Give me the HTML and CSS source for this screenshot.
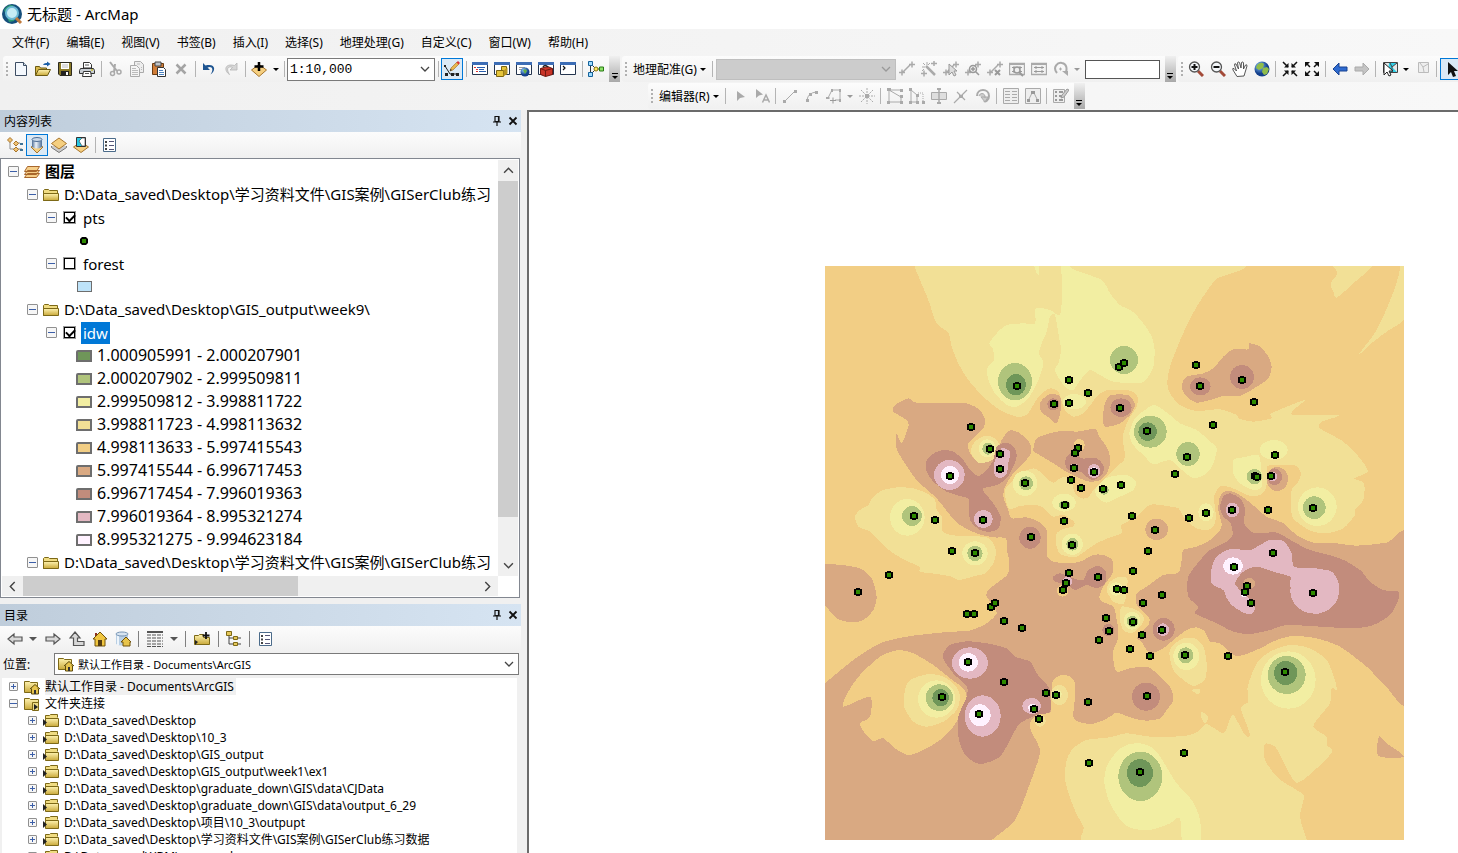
FILE: index.html
```html
<!DOCTYPE html>
<html lang="zh-CN">
<head>
<meta charset="utf-8">
<title>无标题 - ArcMap</title>
<link rel="stylesheet" href="styles.css">
</head>
<body>
<svg class="sprite" aria-hidden="true">
  <defs>
    <linearGradient id="gold" x1="0" y1="0" x2="0" y2="1"><stop offset="0" stop-color="#fff3b0"/><stop offset="1" stop-color="#c9a93a"/></linearGradient>
    <linearGradient id="metal"><stop offset="0" stop-color="#4d6d95"/><stop offset=".4" stop-color="#eef4fa"/><stop offset="1" stop-color="#4d6d95"/></linearGradient>
    <radialGradient id="ball" cx=".35" cy=".3"><stop offset="0" stop-color="#8cc8ff"/><stop offset="1" stop-color="#14408c"/></radialGradient>
  </defs>
  <symbol id="new" viewBox="0 0 16 16"><path d="M2.500 1.500h8l3 3v10h-11z" fill="#f4f8fd" stroke="#3d4d63"/><path d="M10.500 1.500v3h3" fill="#cddbea" stroke="#3d4d63"/></symbol>
  <symbol id="open" viewBox="0 0 16 16"><path d="M.5 14V5.500h4l1 1.500h6v7z" fill="#d9b94c" stroke="#6b5a12"/><path d="M.5 14.500l3-6h12l-3 6z" fill="url(#gold)" stroke="#6b5a12"/><path d="M8 4c1-2 3-2 4-2V.5L15.500 3 12 5.500V4c-2 0-3 0-4 0" fill="#1c5fa8"/></symbol>
  <symbol id="save" viewBox="0 0 16 16"><path d="M1.500 1.500h13v13H3l-1.500-1.500z" fill="#8b7a28" stroke="#2c2a20"/><path d="M4 2h8v6H4z" fill="#fff"/><path d="M5 4h6M5 6h6" stroke="#bbb"/><path d="M4 10h8v4H4z" fill="#222"/><path d="M9 11h2v3H9z" fill="#fff"/></symbol>
  <symbol id="print" viewBox="0 0 16 16"><path d="M4.500 7V1.500h6l2 2V7z" fill="#fff" stroke="#333"/><path d="M1.500 7.500h13l1 2v3H.5v-3z" fill="#c9ced4" stroke="#333"/><path d="M4.500 10.500h7l1 5h-9z" fill="#fff" stroke="#333"/><path d="M6 4h4M6 12.500h4" stroke="#555"/><path d="M12 9h2" stroke="#c8c12c" stroke-width="1.500"/></symbol>
  <symbol id="cut" viewBox="0 0 16 16"><path d="M3 1l7 9M8 3L7 11" stroke="#aaa" stroke-width="2" fill="none"/><circle cx="5.500" cy="12.500" r="2" fill="none" stroke="#aaa" stroke-width="1.500"/><circle cx="12" cy="11" r="2" fill="none" stroke="#aaa" stroke-width="1.500"/></symbol>
  <symbol id="copy" viewBox="0 0 16 16"><path d="M5.500.5h6l3 3v8h-9z" fill="#eee" stroke="#aaa"/><path d="M1.500 4.500h6l3 3v8h-9z" fill="#f4f4f4" stroke="#aaa"/><path d="M3 7.500h4M3 9.500h6M3 11.500h6M3 13.500h6M8 3h3M12 6.500h1M12 8.500h1" stroke="#bbb"/></symbol>
  <symbol id="paste" viewBox="0 0 16 16"><path d="M1.500 2.500h11v11h-11z" fill="#d07d38" stroke="#6b3c12"/><path d="M4 1h6v4H4z" fill="#bfc5cb" stroke="#444"/><path d="M6.500 6.500h6l2 2v7h-8z" fill="#fff" stroke="#333"/><path d="M8 9.500h4M8 11.500h5M8 13.500h5" stroke="#4c82bf"/></symbol>
  <symbol id="delete" viewBox="0 0 16 16"><path d="M3.500 3.500l9 9M12.500 3.500l-9 9" stroke="#a4a4a4" stroke-width="2.500"/></symbol>
  <symbol id="undo" viewBox="0 0 16 16"><path d="M2 2v7h7L6.500 6.500c4-2 7 1 3 7C15 10 15 2 4.500 4.500z" fill="#1e5591"/></symbol>
  <symbol id="redo" viewBox="0 0 16 16"><path d="M14 2v7H7l2.500-2.500c-4-2-7 1-3 7C1 10 1 2 11.500 4.500z" fill="#d6d6d6" stroke="#b5b5b5" stroke-width=".8"/></symbol>
  <symbol id="add" viewBox="0 0 16 16"><path d="M.5 9L8 3.500 15.500 9 8 15.500z" fill="#f5cf80" stroke="#a8762d"/><path d="M8 1v9M3.500 5.500h9" stroke="#000" stroke-width="2.500"/></symbol>
  <symbol id="editor" viewBox="0 0 16 16"><path d="M1 5l5 8h9" fill="none" stroke="#222"/><path d="M0 4h2v2H0zM1 12h3v3H1zM7 12h3v3H7zM12 12h3v3h-3z" fill="#222"/><path d="M6 10l1-3 6-6 2 2-6 6z" fill="#e8b74f" stroke="#9b6a20" stroke-width=".6"/><path d="M12.500 1.500L14 0l2 2-1.500 1.500z" fill="#d33"/><path d="M6 10l.5-2L8 9z" fill="#222"/></symbol>
  <symbol id="window" viewBox="0 0 16 16"><path d="M.5 1.500h15v12H.5z" fill="#fff" stroke="#24344d"/><path d="M0 1h16v3H0z" fill="#3d6db5"/></symbol>
  <symbol id="toc" viewBox="0 0 16 16"><use href="#window"/><path d="M2 6.500h2M4 8.500h2M4 10.500h2" stroke="#d33"/><path d="M5 6.500h8M7 8.500h5M7 10.500h7" stroke="#2b5fae"/></symbol>
  <symbol id="cat" viewBox="0 0 16 16"><use href="#window"/><path d="M7.500 5.500h5v8h-5z" fill="#e6c53b" stroke="#7c6510"/><path d="M2.500 9.500h7v6h-7z" fill="#e6c53b" stroke="#7c6510"/><path d="M9.500 9.500l4-3v6l-4 3z" fill="#b89620"/></symbol>
  <symbol id="search" viewBox="0 0 16 16"><use href="#window"/><path d="M3 6.500h6M3 8.500h3" stroke="#999"/><circle cx="9" cy="11" r="4.500" fill="url(#ball)"/><path d="M7 9q3-2 4 1l-2 3z" fill="#65b046"/></symbol>
  <symbol id="toolbox" viewBox="0 0 16 16"><use href="#window"/><path d="M2.500 7.500l7-2 5 2v6l-7 2-5-2z" fill="#c93427" stroke="#701810"/><path d="M2.500 7.500l5 2 7-2M7.500 9.500v6" stroke="#701810" fill="none"/><path d="M5 6q2-3 5 0" fill="none" stroke="#222" stroke-width="1.500"/></symbol>
  <symbol id="python" viewBox="0 0 16 16"><use href="#window"/><path d="M3 5l2 2-2 2" fill="none" stroke="#111" stroke-width="1.200"/></symbol>
  <symbol id="model" viewBox="0 0 16 16"><path d="M2.500 5v6M4 4l4 4-4 4M8 8h4" fill="none" stroke="#333"/><path d="M.5.5h4v4h-4zM.5 11.500h4v4h-4z" fill="#9fdcff" stroke="#15629b"/><circle cx="8" cy="8" r="2" fill="#ffe75a" stroke="#8c7610"/><path d="M11.500 6h4v4h-4z" fill="#8be067" stroke="#287a14"/></symbol>
  <symbol id="link" viewBox="0 0 16 16"><path d="M4 11l8-8M0 11.500h6M3 8.500v6M10 3.500h6M13 .5v6" stroke="#aaa" stroke-width="1.500"/></symbol>
  <symbol id="auto" viewBox="0 0 16 16"><path d="M5 5l9 9" stroke="#aaa" stroke-width="2.500"/><path d="M0 12.500h6M3 9.500v6M10 2.500h6M13 0v5" stroke="#aaa" stroke-width="1.500"/><path d="M6 1v3M1 6h3M2 2l2 2M9 2L7 4M3 8L1 10" stroke="#aaa"/></symbol>
  <symbol id="selectlink" viewBox="0 0 16 16"><use href="#link"/><path d="M6 3v11l3-3 2 4 2-1-2-4h3z" fill="#ddd" stroke="#999"/></symbol>
  <symbol id="zoomlink" viewBox="0 0 16 16"><use href="#link"/><circle cx="8" cy="8" r="3.500" fill="#eee" stroke="#999" stroke-width="1.500"/><path d="M10.500 10.500L14 14M6 8h4M8 6v4" stroke="#999" stroke-width="1.500"/></symbol>
  <symbol id="dellink" viewBox="0 0 16 16"><use href="#link"/><path d="M8 9l5 5M13 9l-5 5" stroke="#999" stroke-width="2"/></symbol>
  <symbol id="view" viewBox="0 0 16 16"><path d="M.5 2.500h15v11H.5z" fill="#f2f2f2" stroke="#aaa" stroke-width="1.300"/><path d="M0 2h16v2H0z" fill="#aaa"/><path d="M3 6.500h10M3 10.500h10M5 5v3M11 5v3M5 9v3M11 9v3" stroke="#999"/></symbol>
  <symbol id="viewzoom" viewBox="0 0 16 16"><use href="#view"/><circle cx="8" cy="9" r="3" fill="#eee" stroke="#999" stroke-width="1.500"/><path d="M10 11l4 4" stroke="#999" stroke-width="2"/></symbol>
  <symbol id="rotate" viewBox="0 0 16 16"><path d="M4 12C-1 6 5 1 9 2c5 1 5 6 4 9" fill="none" stroke="#aaa" stroke-width="2"/><path d="M9 10h6v5z" fill="#aaa"/><path d="M6 8h3M7.500 6.500v3" stroke="#aaa"/></symbol>
  <symbol id="zoomin" viewBox="0 0 16 16"><path d="M10 10l5 5" stroke="#a34a38" stroke-width="3"/><circle cx="6.500" cy="6" r="5" fill="#f4f7fa" stroke="#555" stroke-width="1.300"/><path d="M3.500 6h6M6.500 3v6" stroke="#111" stroke-width="2"/></symbol>
  <symbol id="zoomout" viewBox="0 0 16 16"><path d="M10 10l5 5" stroke="#a34a38" stroke-width="3"/><circle cx="6.500" cy="6" r="5" fill="#f4f7fa" stroke="#555" stroke-width="1.300"/><path d="M3.500 6h6" stroke="#111" stroke-width="2"/></symbol>
  <symbol id="pan" viewBox="0 0 16 16"><path d="M5 15.500L1 9Q0 7 2 7.500L4.500 10 2.500 4Q2.500 2 4 3l2.500 5L5.500 2Q6 0 7.500 1.500L9 7 9.500 1.500Q11 0 11.500 2V8l2-4Q15 3 15 5l-3 10z" fill="#fff" stroke="#444" stroke-width=".9"/></symbol>
  <symbol id="globe" viewBox="0 0 16 16"><circle cx="8" cy="8" r="7.500" fill="url(#ball)"/><path d="M3 4q4-4 7-1L9 7 5 9 2 7zM9 7l4-1 2 2-2 5-3 1-2-3z" fill="#8fbc4a"/></symbol>
  <symbol id="fixin" viewBox="0 0 16 16"><path d="M1 1l5 5M15 1l-5 5M1 15l5-5M15 15l-5-5" stroke="#111" stroke-width="1.500"/><path d="M2 6.500h4.500V2M14 6.500H9.500V2M2 9.500h4.500V14M14 9.500H9.500V14" fill="#111"/></symbol>
  <symbol id="fixout" viewBox="0 0 16 16"><path d="M6 6L2 2M10 6l4-4M6 10l-4 4M10 10l4 4" stroke="#111" stroke-width="1.500"/><path d="M1 6V1h5M15 6V1h-5M1 10v5h5M15 10v5h-5" fill="#111"/></symbol>
  <symbol id="back" viewBox="0 0 16 16"><path d="M1 8l6-6v4h8v4H7v4z" fill="#2f6bd0" stroke="#194391"/></symbol>
  <symbol id="fwd" viewBox="0 0 16 16"><path d="M15 8L9 2v4H1v4h8v4z" fill="#c4c4c4" stroke="#aaa"/></symbol>
  <symbol id="selfeat" viewBox="0 0 16 16"><path d="M1.500 1.500h14v10h-14z" fill="#e8e8e8" stroke="#444"/><path d="M7 2h8l-5 4 5 5H6z" fill="#2fd0e8"/><path d="M8 2l2 4 5-4M10 6v6" stroke="#444" fill="none"/><path d="M2 2v12l3-3 2 4 2-1-2-4h4z" fill="#fff" stroke="#222"/></symbol>
  <symbol id="clearsel" viewBox="0 0 16 16"><path d="M3.500 1.500h10v10h-10z" fill="#eee" stroke="#bbb"/><path d="M5 2l3 4 5-3M8 6l1 5" stroke="#bbb" fill="none"/></symbol>
  <symbol id="pointer" viewBox="0 0 16 16"><path d="M5 1v13l3-3 2 5 3-1-2-5h4z" fill="#111"/></symbol>
  <symbol id="e-play" viewBox="0 0 16 16"><path d="M5 3v10l3-3 5-1z" fill="#aaa"/></symbol>
  <symbol id="e-anno" viewBox="0 0 16 16"><path d="M2 1v9l3-2.500 4-1z" fill="#aaa"/><path d="M8.500 14.500L12 7l3.500 7.500M10 12h4" fill="none" stroke="#aaa" stroke-width="1.500"/></symbol>
  <symbol id="e-line" viewBox="0 0 16 16"><path d="M3 13L13 3" stroke="#aaa"/><path d="M1 12h3v3H1zM12 2h3v3h-3z" fill="#aaa"/></symbol>
  <symbol id="e-arc" viewBox="0 0 16 16"><path d="M3 12Q4 5 12 4" stroke="#aaa" fill="none"/><path d="M2 11h3v3H2zM5 5h3v3H5zM11 3h3v3h-3z" fill="#aaa"/></symbol>
  <symbol id="e-trace" viewBox="0 0 16 16"><path d="M2 10l4-8h8v10H9M1 10h3" stroke="#aaa" fill="none"/><path d="M4 12.500h6M7 9.500v6" stroke="#999"/><path d="M5 1h2v3H5zM13 1h2v3h-2zM13 11h2v3h-2zM0 9h3v2H0z" fill="#aaa"/></symbol>
  <symbol id="e-point" viewBox="0 0 16 16"><path d="M8 0v16M0 8h16M2 2l12 12M14 2L2 14" stroke="#aaa" stroke-dasharray="2 1"/><path d="M6 6h4v4H6z" fill="#aaa"/></symbol>
  <symbol id="e-verts" viewBox="0 0 16 16"><path d="M2 2v12h12V9zM2 2h12" fill="none" stroke="#aaa"/><path d="M0 0h4v3H0zM13 1h3v3h-3zM0 13h3v3H0zM13 13h3v3h-3zM13 7h3v3h-3z" fill="#aaa"/></symbol>
  <symbol id="e-reshape" viewBox="0 0 16 16"><path d="M2 1v13h6M2 2l6 5v7" fill="none" stroke="#aaa"/><path d="M9 5h5v9" fill="none" stroke="#aaa" stroke-dasharray="1 1"/><path d="M0 0h3v3H0zM0 13h3v3H0zM7 6h3v3H7zM7 13h3v3H7zM13 13h3v3h-3z" fill="#aaa"/></symbol>
  <symbol id="e-cut" viewBox="0 0 16 16"><path d="M.5 4.500h15v7H.5z" fill="#dedede" stroke="#aaa"/><path d="M8 1v14" stroke="#aaa" stroke-width="1.500"/><path d="M6 0h4v2H6zM6 14h4v2H6z" fill="#aaa"/></symbol>
  <symbol id="e-split" viewBox="0 0 16 16"><path d="M1 15L14 2M4 4l8 8" stroke="#aaa" stroke-width="1.200"/><path d="M6 7h4v3H6z" fill="#aaa"/></symbol>
  <symbol id="e-rot" viewBox="0 0 16 16"><path d="M2 8c0-8 12-8 12 0 0 5-4 6-5 5" fill="none" stroke="#aaa" stroke-width="2"/><path d="M4 8c1-4 7-3 6 2M6 9h7l-3 5z" fill="#ccc" stroke="#aaa"/></symbol>
  <symbol id="e-attr" viewBox="0 0 16 16"><path d="M.5.5h15v15H.5z" fill="#eee" stroke="#aaa"/><path d="M2 3.500h5M2 6.500h5M2 9.500h5M2 12.500h5M9 3.500h5M9 6.500h5M9 9.500h5M9 12.500h5" stroke="#aaa"/></symbol>
  <symbol id="e-sketch" viewBox="0 0 16 16"><path d="M.5.5h15v15H.5z" fill="#eee" stroke="#aaa"/><path d="M3 13l4-8h2l4 8" fill="none" stroke="#aaa"/><path d="M6 3h4v3H6zM2 11h3v3H2zM11 11h3v3h-3z" fill="#999"/></symbol>
  <symbol id="e-create" viewBox="0 0 16 16"><path d="M.5 1.500h11v13H.5z" fill="#eee" stroke="#aaa"/><path d="M2 4h2M2 8h2M2 12h2M6 4h4M6 8h3M6 12h4" stroke="#999" stroke-width="2"/><path d="M8 10l1-3 5-6 2 1-5 7z" fill="#ccc" stroke="#999"/></symbol>
  <symbol id="t-order" viewBox="0 0 16 16"><path d="M3 5v7h5M7 6h6M11 12h4" fill="none" stroke="#8b8b8b"/><path d="M3 .5L5.500 3 3 5.500.5 3zM9 4l2.500 2.500L9 9 6.500 6.500zM9 10l2.500 2.500L9 15l-2.500-2.500z" fill="#f0c172" stroke="#a8762d"/><path d="M13 6h3v2h-3zM13 12h3v2h-3z" fill="#3e7397"/></symbol>
  <symbol id="t-source" viewBox="0 0 16 16"><path d="M2 10l6-3 6 3-6 6z" fill="#f5cf80" stroke="#a8762d"/><path d="M3 2v8q5 3 10 0V2" fill="url(#metal)"/><ellipse cx="8" cy="2.500" rx="5" ry="2" fill="#c9d8e8" stroke="#4d6d95"/></symbol>
  <symbol id="t-vis" viewBox="0 0 16 16"><path d="M.5 9v1.500L8 15.500l7.500-5V9" fill="#ccc" stroke="#777"/><path d="M.5 6.500L8 1l7.500 5.500L8 12z" fill="#f5cf80" stroke="#a8762d"/></symbol>
  <symbol id="t-sel" viewBox="0 0 16 16"><path d="M.5 10L8 5l7.500 5L8 15.500z" fill="#f5cf80" stroke="#a8762d"/><path d="M3.500.5h9v9h-9z" fill="#26c8e4" stroke="#333"/><path d="M9 1h3v8H9L6 4z" fill="#fff" stroke="#333" stroke-width=".6"/></symbol>
  <symbol id="t-opt" viewBox="0 0 16 16"><path d="M2.500 1.500h12v13h-12z" fill="#fff" stroke="#4b6b8a"/><path d="M4 4h2v2H4zM4 7.500h2v2H4zM4 11h2v2H4z" fill="#444"/><path d="M8 4.500h5M8 8.500h5M8 12.500h5" stroke="#557"/></symbol>
  <symbol id="layers" viewBox="0 0 16 16"><path d="M.5 13.500l3-4h12l-3 4zM.5 10.500l3-4h12l-3 4zM.5 7.500l3-5h12l-3 5z" fill="#f6cf8a" stroke="#a8672d"/></symbol>
  <symbol id="folder" viewBox="0 0 16 16"><path d="M.5 13.500v-10l1-1h4l1 1h8v10z" fill="#f0dc82" stroke="#7d6917"/><path d="M.5 6.500h15v7H.5z" fill="url(#gold)" stroke="#7d6917"/></symbol>
  <symbol id="cfolder" viewBox="0 0 16 16"><path d="M2.500 12.500v-10h4l1-1h7v3" fill="#f0dc82" stroke="#7d6917"/><path d="M2.500 5.500h13v8h-13z" fill="url(#gold)" stroke="#7d6917"/><path d="M0 6l4 3.500L0 13z" fill="#222"/></symbol>
  <symbol id="homefolder" viewBox="0 0 16 16"><path d="M.5 13.500v-11h5l1 1h7v10z" fill="url(#gold)" stroke="#7d6917"/><path d="M6 10l5-4.500 5 4.500M7.500 9.500V15h7V9.500" fill="#e8c44b" stroke="#5d4a0b"/><path d="M10 11h2v4h-2z" fill="#333"/></symbol>
  <symbol id="foldercon" viewBox="0 0 16 16"><path d="M.5 13.500v-11h5l1 1h8v10z" fill="url(#gold)" stroke="#7d6917"/><path d="M8.500 6.500h6v8h-6z" fill="#eddb88" stroke="#7d6917"/><path d="M10 8l4 3-4 3z" fill="#222"/></symbol>
  <symbol id="c-back" viewBox="0 0 16 16"><path d="M1 8l6-5v3h8v4H7v3z" fill="#d8d8d8" stroke="#555" stroke-width="1.200"/></symbol>
  <symbol id="c-fwd" viewBox="0 0 16 16"><path d="M15 8L9 3v3H1v4h8v3z" fill="#d8d8d8" stroke="#555" stroke-width="1.200"/></symbol>
  <symbol id="c-up" viewBox="0 0 16 16"><path d="M6 1l5 6H8.500v3.500H15v4H4.500V7H1z" fill="#d8d8d8" stroke="#555" stroke-width="1.200"/></symbol>
  <symbol id="c-home" viewBox="0 0 16 16"><path d="M3 2h2v5H3z" fill="#8c2f1c"/><path d="M1 8l7-7 7 7h-2v7H3V8z" fill="#f0c640" stroke="#70520b"/><path d="M6 9h4v6H6z" fill="#553e12"/></symbol>
  <symbol id="c-gdb" viewBox="0 0 16 16"><path d="M1 3v10q5 3 12 0V3" fill="#b9cfe4"/><path d="M3 4v10" stroke="#eef5fb" stroke-width="2"/><ellipse cx="7" cy="3" rx="6" ry="2" fill="#d7e4f1" stroke="#7795b5"/><path d="M6 11l5-5 5 5h-1v4H8v-4z" fill="#e8c44b" stroke="#70520b"/></symbol>
  <symbol id="c-list" viewBox="0 0 16 16"><path d="M0 0h16v2H0z" fill="#555"/><path d="M0 4h16M0 7h16M0 10h16M0 13h16M0 15.500h16" stroke="#555" stroke-width="1.200" stroke-dasharray="4 1"/></symbol>
  <symbol id="c-connect" viewBox="0 0 16 16"><path d="M.5 13.500v-9h4l1-1h4v3h6v7z" fill="url(#gold)" stroke="#7d6917"/><path d="M12 1v7M8.500 4.500h7" stroke="#111" stroke-width="1.800"/><path d="M1 9l3 2-3 3z" fill="#222"/></symbol>
  <symbol id="c-tree" viewBox="0 0 16 16"><path d="M3 4v9h4M3 7h4M12 7h3M12 13h3" fill="none" stroke="#444"/><path d="M.5.5h5v4h-5zM7.500 5.500h4v3h-4zM7.500 11.500h4v3h-4z" fill="#e6c859" stroke="#7d6917"/></symbol>
  <symbol id="pin" viewBox="0 0 10 10"><path d="M3 .5h4v5H3zM1 6h8M5 6v4M6.500 1v5" fill="none" stroke="#111" stroke-width="1.200"/></symbol>
  <symbol id="close" viewBox="0 0 10 10"><path d="M1.500 1.500l7 7M8.500 1.500l-7 7" stroke="#111" stroke-width="1.800"/></symbol>
  <symbol id="chev" viewBox="0 0 10 10"><path d="M1 3l4 4 4-4" fill="none" stroke="currentColor" stroke-width="1.300"/></symbol>
</svg>

<header class="titlebar">
  <svg class="logo" viewBox="0 0 22 22"><circle cx="11" cy="11" r="10" fill="#154f7c"/><path d="M3 7q5-7 10-4l-2 3 5 3-3 9-5 1z" fill="#2c9a72"/><circle cx="11" cy="10" r="6" fill="#c7ecf5" stroke="#6db9d6" stroke-width="2"/><path d="M15 15l5 5" stroke="#c07a3c" stroke-width="3"/></svg>
  <h1>无标题 - ArcMap</h1>
</header>

<nav class="menubar">
  <button>文件(F)</button><button>编辑(E)</button><button>视图(V)</button><button>书签(B)</button><button>插入(I)</button><button>选择(S)</button><button>地理处理(G)</button><button>自定义(C)</button><button>窗口(W)</button><button>帮助(H)</button>
</nav>

<div class="toolbars">
  <div class="toolrow">
    <div class="bar" role="toolbar" aria-label="标准">
      <i class="grip"></i>
      <button class="tb" aria-label="新建"><svg><use href="#new"/></svg></button><button class="tb" aria-label="打开"><svg><use href="#open"/></svg></button><button class="tb" aria-label="保存"><svg><use href="#save"/></svg></button><button class="tb" aria-label="打印"><svg><use href="#print"/></svg></button><i class="sep"></i>
      <button class="tb" aria-label="剪切"><svg><use href="#cut"/></svg></button><button class="tb" aria-label="复制"><svg><use href="#copy"/></svg></button><button class="tb" aria-label="粘贴"><svg><use href="#paste"/></svg></button><button class="tb" aria-label="删除"><svg><use href="#delete"/></svg></button><i class="sep"></i>
      <button class="tb" aria-label="撤消"><svg><use href="#undo"/></svg></button><button class="tb" aria-label="恢复"><svg><use href="#redo"/></svg></button><i class="sep"></i>
      <button class="tb" aria-label="添加数据"><svg><use href="#add"/></svg></button><button class="drop" aria-label="更多数据"></button><i class="sep"></i>
      <span class="combo scale"><select aria-label="比例"><option>1:10,000</option></select><svg><use href="#chev"/></svg></span><i class="sep"></i>
      <button class="tb on" aria-label="编辑器工具条"><svg><use href="#editor"/></svg></button><i class="sep"></i>
      <button class="tb" aria-label="内容列表"><svg><use href="#toc"/></svg></button><button class="tb" aria-label="目录"><svg><use href="#cat"/></svg></button><button class="tb" aria-label="搜索"><svg><use href="#search"/></svg></button><button class="tb" aria-label="工具箱"><svg><use href="#toolbox"/></svg></button><button class="tb" aria-label="Python"><svg><use href="#python"/></svg></button><i class="sep"></i>
      <button class="tb" aria-label="模型构建器"><svg><use href="#model"/></svg></button><button class="more" aria-label="工具条选项"></button>
    </div>
    <div class="bar" role="toolbar" aria-label="地理配准">
      <i class="grip"></i>
      <button class="textbtn">地理配准(G)<i></i></button><i class="sep"></i>
      <span class="combo off"><select aria-label="图层" disabled><option></option></select><svg><use href="#chev"/></svg></span>
      <button class="tb" aria-label="控制点"><svg><use href="#link"/></svg></button><button class="tb" aria-label="自动配准"><svg><use href="#auto"/></svg></button><button class="tb" aria-label="选择链接"><svg><use href="#selectlink"/></svg></button><button class="tb" aria-label="缩放至链接"><svg><use href="#zoomlink"/></svg></button><button class="tb" aria-label="删除链接"><svg><use href="#dellink"/></svg></button><button class="tb" aria-label="查看器"><svg><use href="#viewzoom"/></svg></button><button class="tb" aria-label="链接表"><svg><use href="#view"/></svg></button><button class="tb" aria-label="旋转"><svg><use href="#rotate"/></svg></button><button class="drop dim" aria-label="旋转选项"></button>
      <input class="angle" type="text" aria-label="角度"><button class="more" aria-label="工具条选项"></button>
    </div>
    <div class="bar grow" role="toolbar" aria-label="工具">
      <i class="grip"></i>
      <button class="tb" aria-label="放大"><svg><use href="#zoomin"/></svg></button><button class="tb" aria-label="缩小"><svg><use href="#zoomout"/></svg></button><button class="tb" aria-label="平移"><svg><use href="#pan"/></svg></button><button class="tb" aria-label="全图"><svg><use href="#globe"/></svg></button><i class="sep"></i>
      <button class="tb" aria-label="固定比例放大"><svg><use href="#fixin"/></svg></button><button class="tb" aria-label="固定比例缩小"><svg><use href="#fixout"/></svg></button><i class="sep"></i>
      <button class="tb" aria-label="后退"><svg><use href="#back"/></svg></button><button class="tb" aria-label="前进"><svg><use href="#fwd"/></svg></button><i class="sep"></i>
      <button class="tb" aria-label="选择要素"><svg><use href="#selfeat"/></svg></button><button class="drop" aria-label="选择方式"></button><button class="tb" aria-label="清除所选"><svg><use href="#clearsel"/></svg></button><i class="sep"></i>
      <button class="tb on" aria-label="选择元素"><svg><use href="#pointer"/></svg></button>
    </div>
  </div>
  <div class="toolrow second">
    <div class="bar" role="toolbar" aria-label="编辑器">
      <i class="grip"></i>
      <button class="textbtn">编辑器(R)<i></i></button><i class="sep"></i>
      <button class="tb" aria-label="编辑工具"><svg><use href="#e-play"/></svg></button><button class="tb" aria-label="编辑注记"><svg><use href="#e-anno"/></svg></button><i class="sep"></i>
      <button class="tb" aria-label="直线段"><svg><use href="#e-line"/></svg></button><button class="tb" aria-label="弧段"><svg><use href="#e-arc"/></svg></button><button class="tb" aria-label="追踪"><svg><use href="#e-trace"/></svg></button><button class="drop dim" aria-label="构造方法"></button><button class="tb" aria-label="点"><svg><use href="#e-point"/></svg></button><i class="sep"></i>
      <button class="tb" aria-label="编辑折点"><svg><use href="#e-verts"/></svg></button><button class="tb" aria-label="整形"><svg><use href="#e-reshape"/></svg></button><button class="tb" aria-label="裁剪面"><svg><use href="#e-cut"/></svg></button><button class="tb" aria-label="分割"><svg><use href="#e-split"/></svg></button><button class="tb" aria-label="旋转"><svg><use href="#e-rot"/></svg></button><i class="sep"></i>
      <button class="tb" aria-label="属性"><svg><use href="#e-attr"/></svg></button><button class="tb" aria-label="草图属性"><svg><use href="#e-sketch"/></svg></button><i class="sep"></i>
      <button class="tb" aria-label="创建要素"><svg><use href="#e-create"/></svg></button><button class="more" aria-label="工具条选项"></button>
    </div>
  </div>
</div>

<main class="work">
  <aside class="dock">
    <section class="panel toc">
      <header class="cap"><h2>内容列表</h2><button aria-label="自动隐藏"><svg><use href="#pin"/></svg></button><button aria-label="关闭"><svg><use href="#close"/></svg></button></header>
      <div class="panelbar">
        <button class="tb" aria-label="按绘制顺序列出"><svg><use href="#t-order"/></svg></button><button class="tb on" aria-label="按源列出"><svg><use href="#t-source"/></svg></button><button class="tb" aria-label="按可见性列出"><svg><use href="#t-vis"/></svg></button><button class="tb" aria-label="按选择列出"><svg><use href="#t-sel"/></svg></button><i class="sep"></i><button class="tb" aria-label="选项"><svg><use href="#t-opt"/></svg></button>
      </div>
      <div class="tocbox">
        <ul class="tree big">
          <li><div class="row"><button class="exp" aria-label="折叠"></button><svg><use href="#layers"/></svg><b>图层</b></div>
            <ul>
              <li><div class="row"><button class="exp" aria-label="折叠"></button><svg><use href="#folder"/></svg><span>D:\Data_saved\Desktop\学习资料文件\GIS案例\GISerClub练习</span></div>
                <ul>
                  <li><div class="row"><button class="exp" aria-label="折叠"></button><input type="checkbox" id="l1" checked><label for="l1">pts</label></div>
                    <div class="row sym"><svg class="pt" viewBox="-4 -4 8 8"><path d="M-2-4h4l2 2v4l-2 2h-4l-2-2v-4z"/><path class="g" d="M-2-2h4v4h-4z"/></svg></div></li>
                  <li><div class="row"><button class="exp" aria-label="折叠"></button><input type="checkbox" id="l2"><label for="l2">forest</label></div>
                    <div class="row sym"><i class="sw water"></i></div></li>
                </ul></li>
              <li><div class="row"><button class="exp" aria-label="折叠"></button><svg><use href="#folder"/></svg><span>D:\Data_saved\Desktop\GIS_output\week9\</span></div>
                <ul>
                  <li><div class="row"><button class="exp" aria-label="折叠"></button><input type="checkbox" id="l3" checked><label for="l3" class="sel">idw</label></div>
                    <div class="row sym"><i class="sw c1"></i><span>1.000905991 - 2.000207901</span></div>
                    <div class="row sym"><i class="sw c2"></i><span>2.000207902 - 2.999509811</span></div>
                    <div class="row sym"><i class="sw c3"></i><span>2.999509812 - 3.998811722</span></div>
                    <div class="row sym"><i class="sw c4"></i><span>3.998811723 - 4.998113632</span></div>
                    <div class="row sym"><i class="sw c5"></i><span>4.998113633 - 5.997415543</span></div>
                    <div class="row sym"><i class="sw c6"></i><span>5.997415544 - 6.996717453</span></div>
                    <div class="row sym"><i class="sw c7"></i><span>6.996717454 - 7.996019363</span></div>
                    <div class="row sym"><i class="sw c8"></i><span>7.996019364 - 8.995321274</span></div>
                    <div class="row sym"><i class="sw c9"></i><span>8.995321275 - 9.994623184</span></div></li>
                </ul></li>
              <li><div class="row"><button class="exp" aria-label="折叠"></button><svg><use href="#folder"/></svg><span>D:\Data_saved\Desktop\学习资料文件\GIS案例\GISerClub练习</span></div></li>
            </ul></li>
        </ul>
        <div class="vbar"><button aria-label="向上"><svg class="up"><use href="#chev"/></svg></button><i></i><button aria-label="向下"><svg><use href="#chev"/></svg></button></div>
        <div class="hbar"><button aria-label="向左"><svg class="left"><use href="#chev"/></svg></button><i></i><button aria-label="向右"><svg class="right"><use href="#chev"/></svg></button></div>
      </div>
    </section>
    <section class="panel catalog">
      <header class="cap"><h2>目录</h2><button aria-label="自动隐藏"><svg><use href="#pin"/></svg></button><button aria-label="关闭"><svg><use href="#close"/></svg></button></header>
      <div class="panelbar">
        <button class="tb" aria-label="后退"><svg><use href="#c-back"/></svg></button><button class="drop grey" aria-label="后退历史"></button><button class="tb wide" aria-label="前进"><svg><use href="#c-fwd"/></svg></button><button class="tb" aria-label="向上一级"><svg><use href="#c-up"/></svg></button><button class="tb" aria-label="默认文件夹"><svg><use href="#c-home"/></svg></button><button class="tb" aria-label="默认地理数据库"><svg><use href="#c-gdb"/></svg></button><i class="sep"></i><button class="tb wide" aria-label="内容面板"><svg><use href="#c-list"/></svg></button><button class="drop grey" aria-label="视图"></button><i class="sep"></i><button class="tb wide" aria-label="连接文件夹"><svg><use href="#c-connect"/></svg></button><i class="sep"></i><button class="tb" aria-label="目录树"><svg><use href="#c-tree"/></svg></button><i class="sep"></i><button class="tb" aria-label="选项"><svg><use href="#t-opt"/></svg></button>
      </div>
      <div class="loc"><label for="loc">位置:</label><span class="combo"><svg class="ico"><use href="#homefolder"/></svg><select id="loc"><option>默认工作目录 - Documents\ArcGIS</option></select><svg><use href="#chev"/></svg></span></div>
      <ul class="tree small">
        <li><div class="row"><button class="exp plus" aria-label="展开"></button><svg><use href="#homefolder"/></svg><span class="hot">默认工作目录 - Documents\ArcGIS</span></div></li>
        <li><div class="row"><button class="exp" aria-label="折叠"></button><svg><use href="#foldercon"/></svg><span>文件夹连接</span></div>
          <ul>
            <li class="row"><button class="exp plus" aria-label="展开"></button><svg><use href="#cfolder"/></svg><span>D:\Data_saved\Desktop</span></li>
            <li class="row"><button class="exp plus" aria-label="展开"></button><svg><use href="#cfolder"/></svg><span>D:\Data_saved\Desktop\10_3</span></li>
            <li class="row"><button class="exp plus" aria-label="展开"></button><svg><use href="#cfolder"/></svg><span>D:\Data_saved\Desktop\GIS_output</span></li>
            <li class="row"><button class="exp plus" aria-label="展开"></button><svg><use href="#cfolder"/></svg><span>D:\Data_saved\Desktop\GIS_output\week1\ex1</span></li>
            <li class="row"><button class="exp plus" aria-label="展开"></button><svg><use href="#cfolder"/></svg><span>D:\Data_saved\Desktop\graduate_down\GIS\data\CJData</span></li>
            <li class="row"><button class="exp plus" aria-label="展开"></button><svg><use href="#cfolder"/></svg><span>D:\Data_saved\Desktop\graduate_down\GIS\data\output_6_29</span></li>
            <li class="row"><button class="exp plus" aria-label="展开"></button><svg><use href="#cfolder"/></svg><span>D:\Data_saved\Desktop\项目\10_3\outpupt</span></li>
            <li class="row"><button class="exp plus" aria-label="展开"></button><svg><use href="#cfolder"/></svg><span>D:\Data_saved\Desktop\学习资料文件\GIS案例\GISerClub练习数据</span></li>
            <li class="row"><button class="exp plus" aria-label="展开"></button><svg><use href="#cfolder"/></svg><span>D:\Data_saved\XBM\new_work</span></li>
          </ul></li>
      </ul>
    </section>
  </aside>
  <section class="canvas"><svg id="map" class="map" viewBox="15 18 1737 1722" role="img" aria-label="idw"></svg></section>
</main>
<script src="map.js"></script>
</body>
</html>
```
FILE: styles.css
```css
* { box-sizing: border-box; }
html, body { height: 100%; }
body {
  margin: 0;
  display: flex;
  flex-direction: column;
  overflow: hidden;
  background: #f0f0f0;
  color: #000;
  font: 12px/17px "Noto Sans", "Noto Sans CJK SC", sans-serif;
}
button { padding: 0; border: 0; background: none; font: inherit; color: inherit; flex: none; }
ul { margin: 0; padding: 0; list-style: none; }
h1, h2 { margin: 0; font-weight: 400; }
i { display: block; flex: none; font-style: normal; }
svg { display: block; width: 16px; height: 16px; flex: none; }
.sprite { position: absolute; width: 0; height: 0; }

.titlebar { display: flex; align-items: center; gap: 4px; height: 29px; padding: 0 0 2px 1px; background: #fff; flex: none; }
.titlebar h1 { font-size: 15px; line-height: 20px; }
.logo { width: 22px; height: 22px; }

.menubar { display: flex; align-items: center; gap: 17px; height: 27px; padding: 0 0 1px 12px; flex: none; background: linear-gradient(90deg, #f0f0f0, #f8f8f8); }

.toolbars { flex: none; height: 54px; background: linear-gradient(90deg, #f0f0f0, #f8f8f8); }
.toolrow { display: flex; gap: 2px; padding-left: 3px; height: 27px; overflow: hidden; }
.toolrow.second { padding-left: 648px; }
.bar { display: flex; align-items: center; height: 26px; flex: none; border-radius: 3px; background: linear-gradient(#fcfcfc, #f0f0f0); }
.bar.grow { flex: 1 0 auto; }
.grip { width: 3px; height: 15px; margin: 0 2px; background: repeating-linear-gradient(#b0b0b0 0 2px, transparent 2px 4px) 1px 0 / 2px 100% no-repeat; }
.tb { display: flex; align-items: center; justify-content: center; width: 22px; height: 22px; }
.tb.on { border: 1px solid #0078d7; background: #dbe9f5; }
.sep { width: 6px; height: 16px; background: linear-gradient(#b4b4b4, #b4b4b4) center / 1px 100% no-repeat; }
.drop { width: 11px; height: 22px; display: flex; align-items: center; justify-content: center; }
.drop::before, .textbtn i { content: ""; border: 3px solid transparent; border-top-color: #000; border-bottom: 0; }
.drop.dim::before { border-top-color: #999; }
.drop.grey::before { border: 4px solid transparent; border-top-color: #555; border-bottom: 0; }
.textbtn { display: flex; align-items: center; gap: 3px; padding: 0 4px; }
.more { align-self: stretch; width: 11px; margin-left: 2px; background: linear-gradient(#f0f0f0, #a8a8a8); display: flex; flex-direction: column; align-items: center; justify-content: flex-end; gap: 2px; padding-bottom: 3px; }
.more::before { content: ""; width: 6px; height: 1px; background: #000; }
.more::after { content: ""; border: 3px solid transparent; border-top-color: #000; border-bottom: 0; }

.combo { display: flex; align-items: center; height: 23px; border: 1px solid #7a7a7a; background: #fff; padding-right: 4px; flex: none; }
.combo select { flex: 1; min-width: 0; height: 100%; padding: 0; border: 0; outline: 0; appearance: none; background: none; font: inherit; color: inherit; opacity: 1; }
.combo > svg:last-child { width: 10px; height: 10px; color: #444; }
.combo.scale { width: 148px; }
.combo.scale select { padding-left: 2px; font: 13px "Liberation Mono", monospace; }
.combo.off { width: 180px; height: 21px; background: #ccc; border-color: #bfbfbf; }
.combo.off > svg:last-child { color: #999; }
.angle { width: 75px; height: 19px; margin: 0 3px 0 2px; border: 1px solid #555; padding: 0 2px; background: #fff; }

.work { flex: 1; display: flex; gap: 6px; min-height: 0; }
.dock { width: 521px; flex: none; display: flex; flex-direction: column; gap: 6px; min-height: 0; }
.panel { display: flex; flex-direction: column; }
.toc { flex: 1 1 0; min-height: 0; }
.catalog { flex: 0 0 249px; min-height: 0; overflow: hidden; }
.cap { display: flex; align-items: center; height: 22px; padding-left: 4px; background: linear-gradient(90deg, #bfcddb, #d6e4f2); flex: none; }
.cap h2 { flex: 1; font-size: 12px; }
.cap button { width: 16px; display: flex; justify-content: center; }
.cap svg { width: 10px; height: 10px; }
.panelbar { display: flex; align-items: center; height: 26px; padding-left: 4px; background: linear-gradient(#fcfcfc, #f0f0f0); flex: none; }
.catalog .panelbar { padding-left: 3px; }
.catalog .tb { width: 23px; }
.catalog .tb.wide { width: 25px; }
.catalog .drop { width: 14px; }
.catalog .sep { width: 8px; background-image: linear-gradient(#808080, #808080); }

.tocbox { flex: 1; min-height: 0; margin-right: 1px; border: 1px solid #828790; background: #fff; padding: 1px; display: grid; grid-template: minmax(0, 1fr) 20px / minmax(0, 1fr) 20px; }
.tree { overflow: hidden; }
.tree ul { padding-left: 19px; }
.row { display: flex; align-items: center; white-space: nowrap; }
.big { padding-left: 6px; font-size: 15px; }
.big .row { height: 23px; }
.exp { width: 11px; height: 11px; margin-right: 5px; border: 1px solid #909090; border-radius: 1px; background: linear-gradient(#3c5fa8, #3c5fa8) center / 7px 1px no-repeat, #f6f6f6; }
.small .exp { width: 9px; height: 9px; margin: 0 6px 0 1px; }
.exp.plus { background: linear-gradient(#3c5fa8, #3c5fa8) center / 5px 1px no-repeat, linear-gradient(#3c5fa8, #3c5fa8) center / 1px 5px no-repeat, #f6f6f6; }
.row > svg { margin-right: 5px; }
.row input { appearance: none; width: 11px; height: 11px; margin: 0 6px 0 2px; border: 1px solid #000; outline: 1px solid #0006; background: #fff; flex: none; }
.row input:checked::before { content: ""; display: block; width: 7px; height: 4px; margin: 1px; border: solid #000; border-width: 0 0 2px 2px; transform: rotate(-45deg); }
.row label { padding: 0 2px; line-height: 22px; }
.row .sel { background: #0078d7; color: #fff; }
.sym { padding-left: 30px; font-size: 16px; }
.sw { width: 16px; height: 12px; margin-right: 5px; border: 2px solid #6e6e6e; border-radius: 2px 0 0 0; }
.row > .pt { width: 8px; height: 8px; margin-left: 4px; }
.pt .g { fill: #2d8a00; }
.water { width: 15px; height: 11px; margin-left: 1px; border-width: 1px; border-radius: 0; background: #bee3f9; }
.c1 { background: #6f9659; } .c2 { background: #b0c47c; } .c3 { background: #f2eea2; }
.c4 { background: #f2e096; } .c5 { background: #f2ce85; } .c6 { background: #d9a982; }
.c7 { background: #c28c7c; } .c8 { background: #e3b8c2; } .c9 { background: #fff2ff; }
.vbar, .hbar { display: flex; background: #f0f0f0; color: #444; }
.vbar { flex-direction: column; }
.vbar button { height: 21px; display: flex; align-items: center; justify-content: center; }
.vbar i { flex: 0 1 336px; min-height: 0; background: #cdcdcd; }
.vbar button:last-child { margin-top: auto; }
.hbar button { width: 21px; display: flex; align-items: center; justify-content: center; }
.hbar i { flex: 0 1 275px; background: #cdcdcd; }
.hbar button:last-child { margin-left: auto; }
.vbar svg, .hbar svg { width: 11px; height: 11px; }
.up { transform: rotate(180deg); }
.left { transform: rotate(90deg); }
.right { transform: rotate(-90deg); }

.loc { display: flex; align-items: center; height: 26px; padding: 0 2px 2px 3px; flex: none; }
.loc label { width: 51px; }
.loc .combo { flex: 1; height: 22px; }
.loc .ico { margin: 0 4px 0 3px; }
.loc select { font-size: 11px; }
.small { flex: 1; margin: 0 4px 0 2px; padding-left: 6px; background: #fff; }
.small .hot { background: #f0f0f0; padding-right: 2px; }

.canvas { flex: 1; min-width: 0; overflow: hidden; background: #fff; border: solid #6b6b6b; border-width: 2px 0 0 2px; padding: 154px 0 0 296px; }
.map { width: 579px; height: 574px; shape-rendering: crispEdges; }
```
FILE: map.js
```js
// Interpolated surface: class colours 1-9, drawn bottom to top over class 5.
const COLORS = ["", "#6f9659", "#b0c47c", "#f2eea2", "#f2e096", "#f2ce85", "#d9a982", "#c28c7c", "#e3b8c2", "#fff2ff"];

// [class, outline points] or [class, cx, cy, rx, ry]
const AREAS = [
  [4, "275,-10 283,18 300,60 325,120 350,190 385,218 395,260 415,310 445,360 490,410 540,450 590,470 620,465 640,435 660,405 690,385 715,395 724,420 735,450 760,470 790,460 815,430 835,405 865,390 930,392 952,410 950,440 925,480 908,530 914,575 912,600 890,620 870,640 845,665 820,690 805,712 785,715 765,700 755,665 740,650 720,655 700,668 680,655 660,635 640,625 600,640 580,660 555,690 560,730 570,748 600,738 640,735 665,740 685,760 700,770 730,765 762,785 760,800 735,805 710,820 708,850 718,880 745,890 770,890 800,870 830,850 870,832 905,820 905,795 950,770 980,740 1000,733 1040,738 1075,745 1090,770 1110,790 1130,805 1160,810 1180,800 1188,770 1182,710 1200,680 1225,680 1250,690 1290,708 1320,705 1335,690 1345,650 1340,625 1350,615 1400,615 1430,618 1443,640 1435,665 1415,690 1412,740 1420,775 1450,800 1480,815 1520,820 1570,805 1605,765 1605,750 1630,720 1632,670 1603,655 1643,635 1620,595 1570,545 1500,505 1505,485 1555,466 1415,463 1455,420 1355,460 1355,475 1300,485 1255,475 1250,465 1200,448 1130,453 1080,435 1050,400 1042,370 1050,320 1085,230 1130,140 1185,60 1235,10"],
  [4, "1540,5 1552,40 1532,70 1540,95 1550,113 1600,70 1660,10"],
  [4, "1745,5 1735,50 1715,110 1670,210 1615,285 1660,245 1700,215 1760,165 1770,10"],
  [4, "235,682 280,685 320,700 345,720 350,750 365,770 365,805 375,820 415,828 450,828 500,832 520,850 528,875 520,910 495,940 465,948 440,955 415,960 395,950 350,942 300,935 298,920 250,898 200,865 150,815 115,800 105,770 120,750 145,735 160,710 190,690"],
  [6, "265,415 290,428 380,428 440,430 480,450 495,480 490,505 470,525 445,550 450,580 475,605 500,605 525,590 545,540 570,511 600,520 630,550 632,580 610,610 580,640 555,680 550,710 565,750 575,775 620,772 655,785 680,810 682,860 682,890 700,905 740,910 780,905 820,885 850,885 875,898 880,925 875,945 850,980 838,1010 845,1025 880,1040 890,1080 895,1110 893,1140 880,1170 880,1200 890,1235 930,1225 980,1220 1010,1240 1050,1280 1060,1320 1040,1350 1020,1375 980,1382 940,1375 890,1358 870,1370 840,1385 810,1392 775,1385 760,1370 765,1310 765,1270 750,1250 725,1245 700,1260 695,1290 690,1340 690,1358 650,1365 632,1385 632,1410 650,1445 660,1470 655,1500 630,1570 585,1680 515,1740 490,1770 0,1770 0,1285 15,1270 100,1200 180,1150 260,1130 340,1120 400,1115 450,1112 500,1090 530,1060 515,1030 500,1010 505,990 550,955 565,940 568,900 560,870 558,835 520,832 470,820 420,795 390,765 350,715 290,660 245,595 228,560 230,520 245,550 265,500 260,480 220,455 225,435"],
  [6, "1090,870 1130,860 1170,840 1200,810 1205,790 1195,750 1200,710 1220,692 1250,700 1280,720 1310,745 1340,770 1390,790 1430,825 1480,848 1550,850 1610,857 1700,848 1770,832 1770,1323 1690,1270 1640,1220 1560,1160 1490,1135 1420,1128 1370,1140 1320,1165 1270,1185 1240,1185 1200,1150 1170,1145 1155,1115 1130,1102 1100,1110 1060,1140 1030,1165 1000,1178 980,1170 965,1145 950,1135 965,1115 985,1095 988,1075 965,1050 948,1030 950,1000 980,980 1030,945 1075,938 1085,900"],
  [6, "0,918 60,915 120,925 155,955 170,1010 160,1050 130,1080 95,1087 50,1075 15,1035 0,1020"],
  [6, "690,402 720,410 722,450 710,490 690,475 663,455 662,425"],
  [6, "870,407 900,403 930,408 945,435 930,465 900,490 875,498 852,498 850,460 855,430"],
  [6, "650,535 690,520 730,512 770,515 825,507 838,530 865,570 870,610 860,640 840,660 810,665 780,655 730,630 700,610 650,580 640,570"],
  [6, "1087,370 1100,350 1150,340 1180,325 1210,290 1240,268 1285,268 1288,250 1320,260 1345,290 1355,320 1345,355 1310,380 1260,408 1210,408 1170,420 1130,428 1100,410 1087,390"],
  [6, 1010, 808, 34, 32], [6, "1677,1430 1700,1450 1752,1490 1675,1488"],
  [6, 1372, 657, 32, 36],
  [5, "235,1170 280,1180 340,1215 390,1255 430,1285 440,1310 425,1355 400,1400 360,1440 310,1470 265,1485 225,1465 190,1435 160,1443 135,1420 120,1390 150,1370 150,1310 70,1340 85,1295 120,1245 180,1190"],
  [5, 778, 555, 16, 18], [5, 728, 992, 17, 18],
  [4, "270,1260 325,1242 370,1250 405,1275 420,1310 410,1350 370,1385 320,1400 280,1385 252,1340 255,1290"],
  [4, "452,575 465,545 495,527 525,535 540,560 530,590 505,605 475,608"],
  [4, "740,1500 760,1465 800,1440 870,1432 920,1420 990,1430 1060,1430 1110,1425 1140,1410 1160,1392 1210,1420 1225,1390 1240,1365 1275,1425 1290,1423 1263,1345 1285,1325 1283,1280 1310,1210 1350,1175 1410,1155 1470,1165 1520,1200 1545,1260 1550,1290 1535,1285 1530,1330 1480,1398 1520,1430 1520,1455 1537,1475 1490,1525 1430,1568 1390,1505 1365,1460 1335,1452 1335,1500 1375,1555 1430,1590 1452,1610 1440,1670 1460,1740 1465,1770 830,1770 790,1700 760,1640 735,1560"],
  [4, "1048,1180 1060,1155 1090,1135 1125,1135 1150,1160 1160,1210 1155,1260 1120,1278 1090,1260 1060,1230"],
  [4, "1145,1355 1165,1370 1155,1390 1143,1370"], [4, "1115,1290 1140,1287 1135,1303"],
  [4, "905,1040 950,1050 973,1075 960,1100 935,1120 910,1110 900,1080"],
  [4, "860,990 870,965 900,950 922,955 920,990 912,1030 880,1025"],
  [4, 718, 1305, 26, 30], [4, 660, 1382, 17, 18],
  [3, "726,0 760,28 845,60 870,100 900,135 938,155 970,190 995,230 1004,270 1000,320 985,350 960,370 880,365 840,345 810,330 785,355 760,390 740,385 720,360 705,330 715,310 723,270 715,220 705,165 690,170 680,215 665,250 657,280 670,310 655,360 625,415 590,440 560,435 525,400 505,360 502,325 522,300 518,265 508,250 530,220 560,195 610,190 645,190 648,145 690,150 720,165 726,100"],
  [3, "642,10 656,10 656,45 648,35"], [3, 763, 425, 35, 23],
  [3, "1005,435 1050,465 1080,490 1130,510 1165,540 1190,565 1180,610 1160,640 1120,655 1080,625 1050,600 1000,613 975,590 940,555 928,520 945,475 975,450"],
  [3, 1361, 570, 42, 30],
  [3, "1240,600 1270,592 1315,585 1323,620 1325,680 1300,690 1260,670 1240,640"],
  [3, 1492, 740, 58, 58], [3, 1158, 757, 23, 27],
  [3, "870,650 920,645 947,665 940,690 900,710 860,728 835,715 825,690 850,660"],
  [3, 615, 670, 37, 38], [3, 732, 728, 35, 27], [3, 757, 853, 32, 32], [3, 465, 880, 38, 36], [3, 262, 772, 52, 55],
  [3, 502, 565, 26, 27],
  [3, "960,1450 1000,1465 1030,1505 1070,1570 1115,1620 1140,1680 1140,1770 1090,1770 1080,1675 1050,1690 1000,1708 950,1708 910,1690 870,1630 853,1570 860,1520 890,1475 920,1455"],
  [3, 1405, 1260, 82, 86], [3, 1099, 1189, 39, 41], [3, 936, 1082, 25, 27], [3, 888, 987, 20, 20], [3, 350, 1317, 56, 56], [3, 713, 1302, 12, 14],
  [2, 585, 365, 51, 56], [2, 912, 300, 42, 42], [2, 991, 515, 49, 48], [2, 1104, 582, 35, 36], [2, 1303, 650, 23, 23],
  [2, 1483, 743, 34, 34], [2, 852, 690, 14, 14], [2, 618, 670, 21, 21], [2, 733, 735, 17, 13], [2, 757, 853, 18, 19],
  [2, 465, 880, 23, 23], [2, 276, 768, 30, 30], [2, 504, 566, 17, 18], [2, 961, 1549, 66, 74], [2, 1400, 1245, 57, 57],
  [2, 1097, 1186, 23, 24], [2, 937, 1084, 17, 17], [2, 889, 987, 9, 9], [2, 358, 1313, 41, 40],
  [1, 588, 374, 30, 32], [1, 983, 515, 28, 28], [1, 960, 1539, 39, 42], [1, 1397, 1239, 35, 36], [1, 362, 1313, 25, 26],
  [7, "370,570 400,575 430,600 450,630 475,648 500,630 520,600 530,560 560,548 585,565 590,590 580,620 560,655 530,675 490,685 495,700 520,730 542,770 535,805 510,815 480,810 450,780 447,720 420,708 380,695 340,665 318,630 320,600 345,578"],
  [7, 700, 433, 18, 18], [7, 903, 443, 32, 28], [7, 630, 833, 32, 33],
  [7, "740,590 760,575 785,595 830,595 852,620 845,645 820,660 800,650 780,635 745,630 735,610"],
  [7, 1141, 379, 31, 27], [7, 1266, 351, 36, 36], [7, 1364, 650, 22, 25],
  [7, "440,1144 500,1150 560,1165 585,1190 630,1205 650,1240 685,1280 690,1300 690,1355 650,1365 600,1390 575,1430 540,1490 480,1512 435,1485 415,1430 415,1370 440,1310 440,1280 400,1240 372,1200 370,1180 390,1155"],
  [7, "700,950 720,940 760,955 790,960 805,930 835,918 858,935 855,970 830,985 800,975 765,990 745,975 705,965"],
  [7, 865, 1110, 18, 18], [7, 978, 1310, 42, 42], [7, 1031, 1108, 33, 34],
  [7, "1145,895 1170,870 1220,845 1238,825 1232,790 1210,770 1200,740 1210,710 1230,700 1260,715 1275,745 1273,790 1300,818 1370,818 1420,845 1470,870 1560,895 1620,930 1650,965 1690,990 1735,995 1735,1020 1710,1065 1660,1095 1600,1105 1500,1100 1400,1095 1350,1110 1290,1122 1240,1115 1190,1090 1125,1060 1135,1040 1105,1010 1105,950"],
  [8, "1175,925 1190,890 1230,868 1290,870 1320,855 1350,840 1390,843 1415,880 1422,920 1480,925 1535,935 1557,975 1545,1030 1500,1060 1460,1055 1420,1020 1410,970 1410,950 1360,935 1310,920 1270,935 1245,970 1270,1000 1295,1025 1305,1045 1295,1062 1270,1058 1235,1035 1218,1010 1210,990 1175,970"],
  [8, 1484, 993, 73, 68],
  [8, 388, 645, 46, 45], [8, "545,565 570,575 565,610 560,640 540,655 522,640 525,600"], [8, 490, 777, 28, 27],
  [8, 822, 633, 19, 21], [8, 762, 622, 11, 11], [8, 1237, 750, 20, 22], [8, 1358, 650, 14, 14], [8, 450, 1209, 54, 47],
  [8, 488, 1368, 54, 62], [8, 635, 1338, 28, 24], [8, 742, 965, 15, 14], [8, 1029, 1109, 18, 19],
  [6, 1288, 970, 18, 16],
  [9, 390, 645, 27, 27], [9, 445, 1207, 29, 28], [9, 480, 1366, 32, 33], [9, 637, 1343, 12, 12], [9, 1239, 918, 30, 26], [9, 822, 633, 10, 11], [9, 1272, 1003, 8, 8]
];

const POINTS = "591,377 747,359 804,398 702,432 747,428 453,500 509,566 540,581 540,627 390,647 615,668 773,563 765,578 762,623 822,635 753,659 783,683 849,687 735,734 732,782 282,767 345,779 489,779 633,830 756,854 396,872 465,878 897,321 912,308 1128,314 1140,377 1266,359 1302,425 900,443 981,512 1179,494 1101,590 1065,641 1365,584 1305,648 1311,650 1353,647 903,674 936,767 1005,809 1107,773 1158,758 1236,749 1344,749 1479,743 984,872 1359,878 207,944 114,995 441,1061 462,1061 513,1040 525,1028 552,1082 606,1103 444,1205 552,1265 366,1311 477,1361 678,1298 708,1304 642,1346 657,1376 804,1325 807,1508 747,938 738,968 729,989 834,951 858,1073 867,1112 837,1139 891,986 939,932 912,989 1026,1004 969,1028 939,1085 1026,1109 966,1124 930,1166 990,1187 1095,1184 1224,1187 1242,920 1281,977 1275,995 1293,1028 1479,998 1395,1235 981,1307 960,1536 1092,1478";

const parse = text => text.split(" ").map(p => p.split(",").map(Number));

// Closed Catmull-Rom outline through the points.
function outline(text) {
  const p = parse(text), n = p.length, k = 8;
  let d = `M${p[0]}`;
  for (let i = 0; i < n; i++) {
    const a = p[(i + n - 1) % n], b = p[i], c = p[(i + 1) % n], e = p[(i + 2) % n];
    d += `C${b[0] + (c[0] - a[0]) / k},${b[1] + (c[1] - a[1]) / k} ${c[0] - (e[0] - b[0]) / k},${c[1] - (e[1] - b[1]) / k} ${c}`;
  }
  return d + "Z";
}

const shapes = AREAS.map(([level, a, b, rx, ry]) => typeof a === "string"
  ? `<path fill="${COLORS[level]}" d="${outline(a)}"/>`
  : `<ellipse fill="${COLORS[level]}" cx="${a}" cy="${b}" rx="${rx}" ry="${ry}"/>`);

const marks = parse(POINTS).map(([x, y]) =>
  `<g transform="translate(${x} ${y})"><path d="M-6-12H6V-9H12V9H6V12H-6V9H-12V-9H-6z"/><path fill="#2d8a00" d="M-6-6H6V6H-6z"/></g>`);

document.getElementById("map").innerHTML =
  `<rect width="1800" height="1800" fill="${COLORS[5]}"/>` + shapes.join("") + marks.join("");
```
